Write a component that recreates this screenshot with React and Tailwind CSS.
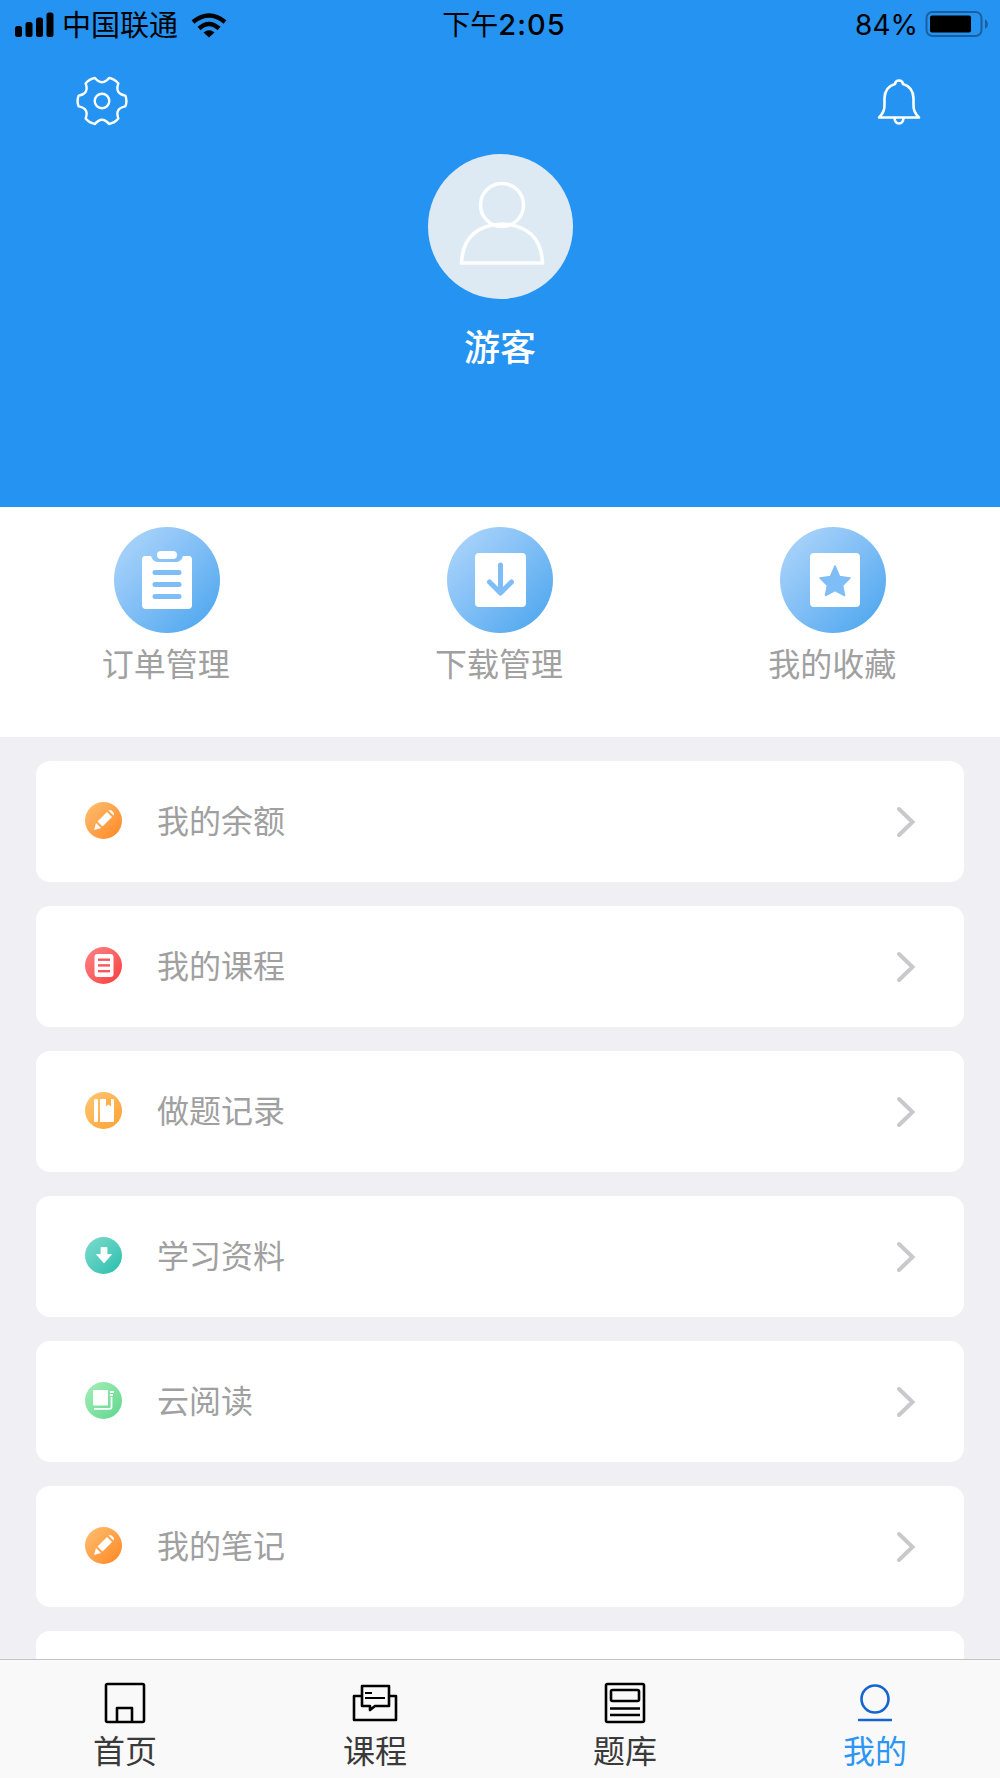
const FONT = "font-['Noto_Sans_CJK_SC','Noto_Sans',sans-serif]";

// six lobes with rounded notches, same outline as the settings glyph
function gearPath() {
  const cx = 26;
  const cy = 25;
  const pt = (deg, r) => {
    const a = (deg * Math.PI) / 180;
    return `${(cx + r * Math.cos(a)).toFixed(2)} ${(cy + r * Math.sin(a)).toFixed(2)}`;
  };
  let d = `M${pt(-13, 24)}`;
  for (let i = 0; i < 6; i++) {
    const a = i * 60;
    d += ` Q${pt(a, 25.5)} ${pt(a + 13, 24)}`;
    d += ` Q${pt(a + 30, 14.5)} ${pt(a + 47, 24)}`;
  }
  return d + " Z";
}

function Signal() {
  return (
    <svg width="40" height="26" viewBox="0 0 40 26" className="ml-[15px]">
      <rect x="0" y="14" width="7" height="11" rx="2.5" fill="#000" />
      <rect x="10.5" y="10" width="7" height="15" rx="2.5" fill="#000" />
      <rect x="21" y="5.5" width="7" height="19.5" rx="2.5" fill="#000" />
      <rect x="31.5" y="0.5" width="7" height="24.5" rx="2.5" fill="#000" />
    </svg>
  );
}

function Wifi() {
  return (
    <svg width="36" height="26" viewBox="0 0 36 26">
      <path d="M2 10 Q18 -3 34 10" fill="none" stroke="#000" strokeWidth="4.4" />
      <path d="M8 16.5 Q18 7.5 28 16.5" fill="none" stroke="#000" strokeWidth="4.4" />
      <path d="M12.5 20.5 Q18 16 23.5 20.5 L18 25.5 Z" fill="#000" />
    </svg>
  );
}

function Battery() {
  return (
    <svg width="66" height="30" viewBox="0 0 66 30">
      <rect x="1.5" y="3" width="55" height="24" rx="6" fill="none" stroke="#1c5f9e" strokeWidth="2" />
      <rect x="5" y="6.5" width="41" height="17" rx="2" fill="#000" />
      <path d="M60 10 Q63 12 63 15 Q63 18 60 20 Z" fill="#1c5f9e" />
    </svg>
  );
}

function Gear() {
  return (
    <svg width="52" height="50" viewBox="0 0 52 50" fill="none" stroke="#fff" strokeWidth="2.4" strokeLinejoin="round">
      <path d={gearPath()} />
      <circle cx="26" cy="25" r="7.3" />
    </svg>
  );
}

function Bell() {
  return (
    <svg width="44" height="46" viewBox="0 0 44 46" fill="none" stroke="#fff" strokeWidth="2.6" strokeLinejoin="round">
      <path d="M2 38.5 Q8 33 7.5 25 L7.5 19 Q8 8 18 5 Q18.5 1.5 22 1.5 Q25.5 1.5 26 5 Q36 8 36.5 19 L36.5 25 Q36 33 42 38.5 Z" />
      <path d="M17.5 39 Q18 44.5 22 44.5 Q26 44.5 26.5 39" />
    </svg>
  );
}

function Avatar() {
  return (
    <svg width="106" height="83" viewBox="0 0 106 83" fill="none" stroke="#fff" strokeWidth="3.6" strokeOpacity="0.92" className="ml-[3px]">
      <circle cx="53" cy="23" r="21.5" />
      <path d="M12.5 81 Q14 44 53 42 Q92 44 93.5 81 Z" strokeLinejoin="miter" />
    </svg>
  );
}

function ClipboardIcon() {
  return (
    <svg width="52" height="58" viewBox="0 0 52 58">
      <rect x="16" y="0" width="20" height="8" rx="4" fill="#fff" />
      <path d="M4 5 L10 5 Q12 11 17 11 L35 11 Q40 11 42 5 L48 5 Q51 5 51 9 L51 54 Q51 58 47 58 L5 58 Q1 58 1 54 L1 9 Q1 5 4 5 Z" fill="#fff" />
      <g fill="#7fbdf6">
        <rect x="11.5" y="19" width="29" height="5" rx="2.5" />
        <rect x="11.5" y="31" width="29" height="5" rx="2.5" />
        <rect x="11.5" y="43" width="29" height="5" rx="2.5" />
      </g>
    </svg>
  );
}

function DownloadIcon() {
  return (
    <svg width="54" height="54" viewBox="0 0 54 54">
      <rect x="2" y="0" width="51" height="54" rx="4" fill="#fff" />
      <path d="M27.5 12 L27.5 39 M16.5 29 L27.5 40 L38.5 29" fill="none" stroke="#7fbdf6" strokeWidth="5" strokeLinecap="round" strokeLinejoin="round" />
    </svg>
  );
}

function StarIcon() {
  return (
    <svg width="56" height="54" viewBox="0 0 56 54">
      <rect x="5" y="0" width="50" height="54" rx="4" fill="#fff" />
      <path d="M30 13 L34.5 23.5 L45 25 L37.5 32.5 L39.5 42.5 L30 37.5 L20.5 42.5 L22.5 32.5 L15 25 L25.5 23.5 Z" fill="#7fbdf6" stroke="#7fbdf6" strokeWidth="1.6" strokeLinejoin="round" />
    </svg>
  );
}

function Pencil() {
  return (
    <svg width="22" height="22" viewBox="0 0 22 22">
      <path d="M1 21 L3 14 L8 19 Z" fill="#fff" />
      <path d="M4.5 12.5 L14 3 L19 8 L9.5 17.5 Z" fill="#fff" />
      <path d="M15.5 1.5 Q17 0.5 18.5 1.5 L20.5 3.5 Q21.5 5 20.5 6.5 Z" fill="#fff" />
    </svg>
  );
}

function Notes() {
  return (
    <svg width="20" height="23" viewBox="0 0 20 23">
      <rect x="0.5" y="0" width="19" height="23" rx="3" fill="#fff" />
      <g fill="#f9575b">
        <rect x="4" y="4.5" width="12" height="2.4" />
        <rect x="4" y="10.2" width="12" height="2.4" />
        <rect x="4" y="16" width="12" height="2.4" />
      </g>
    </svg>
  );
}

function Book() {
  return (
    <svg width="20" height="23" viewBox="0 0 20 23">
      <rect x="0" y="0" width="4" height="23" rx="1.2" fill="#fff" />
      <path d="M6 0 L19 0 Q20 0 20 1.2 L20 21.8 Q20 23 19 23 L6 23 Z" fill="#fff" />
      <path d="M12 0 L17 0 L17 7.5 L14.5 5.6 L12 7.5 Z" fill="#ffb04a" />
    </svg>
  );
}

function Arrow() {
  return (
    <svg width="16" height="17" viewBox="0 0 16 17">
      <path d="M5 0.5 L11 0.5 L11 7.5 L15.5 7.5 L8 16 L0.5 7.5 L5 7.5 Z" fill="#fff" stroke="#fff" strokeWidth="0.8" strokeLinejoin="round" />
    </svg>
  );
}

function Reader() {
  return (
    <svg width="22" height="20" viewBox="0 0 22 20">
      <path d="M1 0 L15 0 L15 15.5 L1 15.5 Q0 15.5 0 14.5 L0 1 Q0 0 1 0 Z" fill="#fff" />
      <path d="M17 2 L21 2 M17 5 L20 5 M18.5 7 L18.5 17 Q18.5 18.8 16.5 18.8 L1 18.8" fill="none" stroke="#fff" strokeWidth="1.8" />
    </svg>
  );
}

function Chevron() {
  return (
    <svg width="20" height="32" viewBox="0 0 20 32" className="mr-[48px]" fill="none" stroke="#c9c9cc" strokeWidth="4" strokeLinecap="round">
      <path d="M3 3 L16.5 16 L3 29" />
    </svg>
  );
}

function HomeTab() {
  return (
    <svg width="42" height="42" viewBox="0 0 42 42" fill="none" stroke="#000" strokeWidth="2.6" strokeLinejoin="round">
      <rect x="2" y="2" width="38" height="38" rx="1.5" />
      <path d="M13 40 L13 26 L28 26 L28 40" />
    </svg>
  );
}

function CourseTab() {
  return (
    <svg width="46" height="38" viewBox="0 0 46 38" fill="none" stroke="#000" strokeWidth="2.6" strokeLinejoin="round">
      <path d="M10 12 L2 12 L2 36 L44 36 L44 12 L37 12" />
      <path d="M10 2 L37 2 L37 22 L23 22 L18 26 L18 22 L10 22 Z" fill="#f9f9f9" />
      <path d="M13 9 L20 9 M13 14 L33 14" strokeWidth="2.2" />
    </svg>
  );
}

function BankTab() {
  return (
    <svg width="42" height="42" viewBox="0 0 42 42" fill="none" stroke="#000" strokeWidth="2.6">
      <rect x="2" y="2" width="38" height="38" rx="1.5" />
      <rect x="7" y="8" width="28" height="11" rx="1.5" />
      <path d="M6 26.5 L36 26.5 M6 33 L36 33" />
    </svg>
  );
}

function MeTab() {
  return (
    <svg width="34" height="38" viewBox="0 0 34 38" fill="none" stroke="#1565d0" strokeWidth="2.6">
      <circle cx="17" cy="15" r="13.5" />
      <path d="M1 36 L33 36" strokeLinecap="round" />
    </svg>
  );
}

const SHORTCUTS = [
  { label: "订单管理", icon: <ClipboardIcon /> },
  { label: "下载管理", icon: <DownloadIcon /> },
  { label: "我的收藏", icon: <StarIcon /> },
];

const MENU = [
  { label: "我的余额", icon: <Pencil />, bg: "bg-gradient-to-br from-[#ffc070] to-[#ff8514]" },
  { label: "我的课程", icon: <Notes />, bg: "bg-gradient-to-br from-[#ff8285] to-[#f7393d]" },
  { label: "做题记录", icon: <Book />, bg: "bg-gradient-to-br from-[#ffc771] to-[#ff9f2c]" },
  { label: "学习资料", icon: <Arrow />, bg: "bg-gradient-to-br from-[#7cdbd0] to-[#17bfaa]" },
  { label: "云阅读", icon: <Reader />, bg: "bg-gradient-to-br from-[#a5eeb8] to-[#5ad68c]" },
  { label: "我的笔记", icon: <Pencil />, bg: "bg-gradient-to-br from-[#ffc070] to-[#ff8514]" },
];

const TABS = [
  { label: "首页", icon: <HomeTab /> },
  { label: "课程", icon: <CourseTab /> },
  { label: "题库", icon: <BankTab /> },
  { label: "我的", icon: <MeTab />, active: true },
];

export default function App() {
  return (
    <div className={`relative h-[1778px] w-[1000px] overflow-hidden bg-[#efeff4] ${FONT}`}>
      {/* Header */}
      <div className="h-[507px] bg-[#2493f2]">
        <div className="flex h-[50px] items-center justify-between">
          <div className="flex items-center">
            <Signal />
            <span className="ml-[7px] pb-[4px] text-[29px] leading-[46px] text-black">中国联通</span>
            <span className="ml-[13px]"><Wifi /></span>
          </div>
          <div className="absolute left-0 right-0 top-0 pl-[8px] text-center text-[28px] leading-[46px] text-black">
            下午<span className="font-['Inter',sans-serif] text-[29px] font-medium tracking-[1px]">2:05</span>
          </div>
          <div className="flex items-center pr-[9px]">
            <span className="font-['Inter',sans-serif] text-[28px] leading-[50px] text-black">84%</span>
            <span className="mb-[2px] ml-[7px]"><Battery /></span>
          </div>
        </div>

        <div className="flex items-start justify-between pl-[76px] pr-[79px] pt-[26px]">
          <Gear />
          <div className="pt-[3px]"><Bell /></div>
        </div>

        <div className="mt-[25px] flex flex-col items-center">
          <div className="mt-[3px] flex h-[145px] w-[145px] items-end justify-center rounded-full bg-[#deeaf3] pb-[34px]">
            <Avatar />
          </div>
          <div className="mt-[20px] text-[36px] font-medium leading-[52px] text-white">游客</div>
        </div>
      </div>

      {/* Shortcuts */}
      <div className="flex h-[230px] bg-white pt-[20px]">
        {SHORTCUTS.map((s) => (
          <div key={s.label} className="flex w-1/3 flex-col items-center">
            <div className="flex h-[106px] w-[106px] items-center justify-center rounded-full bg-gradient-to-br from-[#b3d8fb] to-[#43a3ee]">
              {s.icon}
            </div>
            <div className="mt-[6px] pr-[2px] text-[32px] leading-[46px] text-[#a0a0a0]">{s.label}</div>
          </div>
        ))}
      </div>

      {/* Menu */}
      <div className="flex flex-col gap-[24px] px-[36px] pt-[24px]">
        {MENU.map((m) => (
          <div key={m.label} className="flex h-[121px] items-center rounded-[14px] bg-white">
            <div className={`mb-[3px] ml-[49px] flex h-[37px] w-[37px] items-center justify-center rounded-full ${m.bg}`}>
              {m.icon}
            </div>
            <span className="ml-[35px] flex-1 pb-[5px] text-[32px] text-[#a0a0a0]">{m.label}</span>
            <Chevron />
          </div>
        ))}
        <div className="h-[121px] rounded-[14px] bg-white" />
      </div>

      {/* Tab bar */}
      <div className="absolute bottom-0 left-0 right-0 flex h-[119px] border-t border-[#c4c4c6] bg-[#f9f9f9]">
        {TABS.map((t) => (
          <div key={t.label} className="flex w-1/4 flex-col items-center pt-[22px]">
            <div className="flex h-[42px] items-center justify-center">{t.icon}</div>
            <div className={`mt-[5px] text-[32px] leading-[40px] ${t.active ? "text-[#2b96f3]" : "text-[#3a3a3a]"}`}>
              {t.label}
            </div>
          </div>
        ))}
      </div>
    </div>
  );
}
